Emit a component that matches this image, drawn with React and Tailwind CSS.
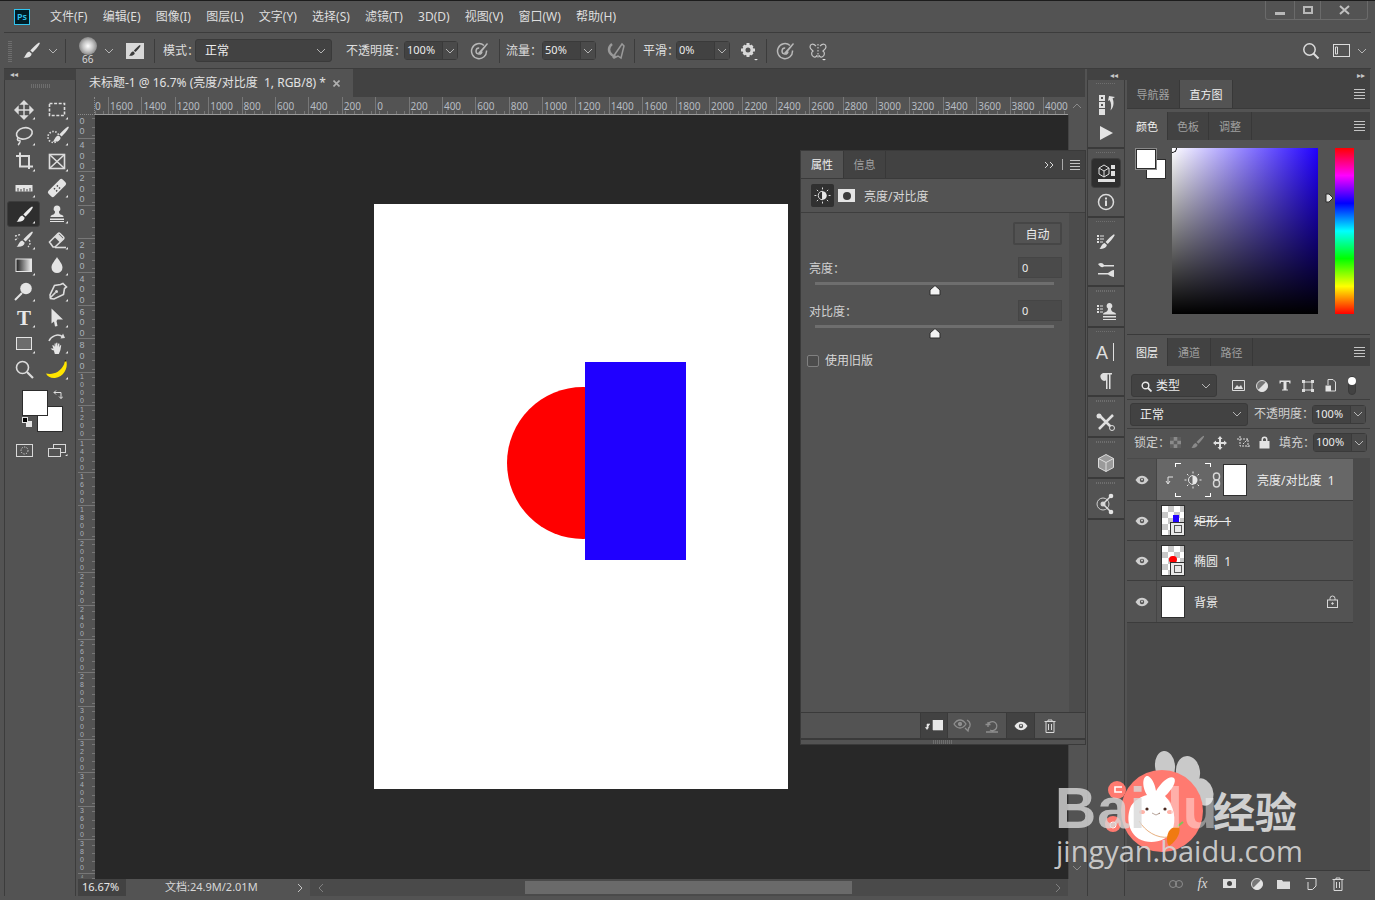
const menus = ["文件(F)", "编辑(E)", "图像(I)", "图层(L)", "文字(Y)", "选择(S)", "滤镜(T)", "3D(D)", "视图(V)", "窗口(W)", "帮助(H)"];
const topRuler = [1600, 1400, 1200, 1000, 800, 600, 400, 200, 0, 200, 400, 600, 800, 1000, 1200, 1400, 1600, 1800, 2000, 2200, 2400, 2600, 2800, 3000, 3200, 3400, 3600, 3800, 4000];
const leftRuler = [400, 200, 0, 200, 400, 600, 800, 1000, 1200, 1400, 1600, 1800, 2000, 2200, 2400, 2600, 2800, 3000, 3200, 3400, 3600, 3800];

function Chevron({ className = "" }) {
  return (
    <svg width="10" height="6" viewBox="0 0 10 6" className={className}>
      <path d="M1 1l4 4 4-4" fill="none" stroke="#b5b5b5" strokeWidth="1" />
    </svg>
  );
}

function BrushShape({ c = "#e2e2e2" }) {
  return (
    <g fill={c}>
      <path d="M23 3.5c.8.1 1 .9.6 1.6-1.600 2.700-4.500 6.200-7 8.500l-2.300-2.100C17 8.700 20.500 5 23 3.500z" />
      <path d="M13.300 12.500l2.400 2.300c-.4 2.900-3.600 4.500-8.200 3.900 2.200-1.100 2-4.900 5.800-6.200z" />
    </g>
  );
}

// 30x24 tool icons, small corner triangle marks a tool group
function Tool({ children, mark = true, active = false }) {
  return (
    <div className={`flex h-[26px] w-[33px] items-center justify-center ${active ? "rounded-[3px] border border-[#3d3d3d] bg-[#2e2e2e]" : ""}`}>
      <svg width="30" height="24" viewBox="0 0 30 24">
        {children}
        {mark && <path d="M26 21.500h-2.500l2.500-2.500z" fill="#e6e6e6" />}
      </svg>
    </div>
  );
}

const S = { fill: "none", stroke: "#dcdcdc", strokeWidth: 1.600 };

const tools = [
  <Tool key="move"><path d="M15 4v16M7 12h16M15 3l-3 3h6zM15 21l-3-3h6zM6 12l3-3v6zM24 12l-3-3v6z" {...S} fill="#dcdcdc" strokeWidth="1.400" /></Tool>,
  <Tool key="marquee"><rect x="7.500" y="5.500" width="15" height="12" {...S} strokeDasharray="3 1.600" /></Tool>,
  <Tool key="lasso"><ellipse cx="15.500" cy="9.500" rx="8" ry="5.500" {...S} transform="rotate(-15 15 10)" /><path d="M9 14c-1.500 2 .5 3 1.500 2.500S11 20 9 21" {...S} /></Tool>,
  <Tool key="quick"><circle cx="11.500" cy="13" r="5.500" {...S} strokeDasharray="1.500 1.500" /><g transform="translate(3 -1)"><BrushShape /></g></Tool>,
  <Tool key="crop" mark><path d="M7 6h13v13M11 2.500v14h13" {...S} strokeWidth="2" /></Tool>,
  <Tool key="frame"><rect x="7.500" y="4.500" width="15" height="14" {...S} /><path d="M8 5l14 13M22 5L8 18" {...S} /></Tool>,
  <Tool key="ruler"><path d="M6.500 9h17v6.500h-17z" fill="#e4e4e4" /><path d="M9 12v3.500M12 13v2.500M15 12v3.500M18 13v2.500M21 12v3.500" stroke="#4a4a4a" /></Tool>,
  <Tool key="heal"><g transform="rotate(-45 15 12)"><rect x="5" y="8" width="20" height="8" rx="2" fill="#e4e4e4" /><path d="M12 10h1.500v1.500H12zM16 10h1.500v1.500H16zM12 13h1.500v1.500H12zM16 13h1.500v1.500H16z" fill="#4a4a4a" /></g></Tool>,
  <Tool key="brush" active><g transform="translate(0 1)"><BrushShape c="#ececec" /></g></Tool>,
  <Tool key="stamp"><path d="M15 3.500a3.300 3.300 0 0 1 2 6c-.2 1.500.6 2.300 1.500 3 1 .5 3 .4 3 2.500H8.500c0-2.100 2-2 3-2.500.9-.7 1.700-1.500 1.500-3a3.300 3.300 0 0 1 2-6zM8 16.500h14V18H8zM8 19h14v1H8z" fill="#e4e4e4" /></Tool>,
  <Tool key="history"><BrushShape /><path d="M6 8l6-1.500M6 12l3-2M20 12c2 2 1 5-1 7" stroke="#dcdcdc" strokeWidth="1.300" strokeDasharray="2 1.200" fill="none" /></Tool>,
  <Tool key="eraser"><path d="M7.500 14L16 5.500a1.500 1.500 0 0 1 2 0l3.500 3.500a1.500 1.500 0 0 1 0 2L13 19H11z" {...S} /><path d="M16 5.500l5.500 5.500L18 14.500l-5.500-5.500z" fill="#dcdcdc" /><path d="M13 19.500h11" {...S} /></Tool>,
  <Tool key="gradient"><defs><linearGradient id="grad"><stop offset="0" stopColor="#1c1c1c" /><stop offset="1" stopColor="#f2f2f2" /></linearGradient></defs><rect x="7" y="5" width="15.500" height="12.500" fill="url(#grad)" stroke="#e4e4e4" /></Tool>,
  <Tool key="drop"><path d="M15 3c1.500 3 5.500 6.500 5.500 10.500a5.500 5.500 0 0 1-11 0C9.500 9.500 13.500 6 15 3z" fill="#e4e4e4" /></Tool>,
  <Tool key="dodge"><circle cx="17" cy="8.500" r="5.800" fill="#e4e4e4" /><path d="M13 13l-7 7" stroke="#e4e4e4" strokeWidth="2" /></Tool>,
  <Tool key="pen"><path d="M21 3.500l3.500 3.500-2 1.500-1 6-9.500 4.500-3.500-.5-.5-3.500 4.500-9.500 6-1z" {...S} /><path d="M8 18l5.500-5.500" {...S} /><circle cx="14.500" cy="11.500" r="1.500" fill="#dcdcdc" /></Tool>,
  <Tool key="type"><text x="15" y="19" textAnchor="middle" fontFamily="Liberation Serif" fontWeight="700" fontSize="21" fill="#e8e8e8">T</text></Tool>,
  <Tool key="arrow"><path d="M9.500 2.500l11.500 11h-5.500l-1 1.500 1 5-2.500.5-1-5-2.500 2z" fill="#e4e4e4" /></Tool>,
  <Tool key="shape"><rect x="7.500" y="5.500" width="15" height="12" fill="#6c6c6c" stroke="#e4e4e4" /></Tool>,
  <Tool key="hand"><path d="M7 9c2-5 9-8 14-4" {...S} strokeWidth="1.500" /><path d="M21 1.500l2 4.500-4.500.5z" fill="#dcdcdc" /><g transform="translate(3 6) scale(.8)"><path d="M10 12l-1-3h1.500l1.500 2V7h1.500v4l.5-5H15.500v5l1-4H18v5l1-3h1.300l-1 6-2 5h-5z M7 13l3 0 2 3-3-1z" fill="#e6e6e6" /></g></Tool>,
  <Tool key="zoom" mark={false}><circle cx="13.500" cy="9.500" r="6" {...S} /><path d="M18 14l6 6" stroke="#dcdcdc" strokeWidth="2.200" /></Tool>,
  <Tool key="banana"><path d="M4 15.500c7 1.500 14-1 18-9l1-3.500 1.500.5c1.500 7-3 15.500-11.500 16.500-4.500.3-7.500-1.500-9-4.500z" fill="#ffe500" /><path d="M23 3.500l.6-1.500" stroke="#33290a" strokeWidth="1.200" /></Tool>,
];

function PanelTab({ label, active, w }) {
  return (
    <div className={`flex h-full items-center justify-center border-r border-[#383838] pt-[2px] text-[11px] ${w} ${active ? "bg-[#535353] text-[#f0f0f0]" : "text-[#a0a0a0]"}`}>
      {label}
    </div>
  );
}

function TabBar({ children }) {
  return (
    <div className="flex h-[28px] shrink-0 items-stretch bg-[#424242]">
      {children}
      <div className="ml-auto flex w-[22px] flex-col items-center justify-center gap-[2px]">
        <i className="h-px w-[11px] bg-[#c4c4c4]" />
        <i className="h-px w-[11px] bg-[#c4c4c4]" />
        <i className="h-px w-[11px] bg-[#c4c4c4]" />
        <i className="h-px w-[11px] bg-[#c4c4c4]" />
      </div>
    </div>
  );
}

function Grip() {
  return <div className="mx-auto h-[4px] w-[20px] bg-[repeating-linear-gradient(90deg,#6e6e6e_0,#6e6e6e_1px,transparent_1px,transparent_2px)]" />;
}

function ComboInput({ value, w = "w-[54px]" }) {
  return (
    <div className={`flex h-[19px] items-center rounded-[3px] border border-[#3a3a3a] text-[11px] text-[#ececec] ${w}`}>
      <div className="flex h-full flex-1 items-center bg-[#424242] pl-[2px]">{value}</div>
      <div className="flex h-full w-[15px] items-center justify-center border-l border-[#3a3a3a] bg-[#4a4a4a]">
        <Chevron />
      </div>
    </div>
  );
}

function Select({ label, w, h = "h-[23px]", icon }) {
  return (
    <div className={`flex items-center justify-between rounded-[3px] border border-[#3a3a3a] bg-[#424242] pr-[5px] text-[12px] text-[#ececec] ${w} ${h}`}>
      <span className="flex items-center gap-[4px] pl-[9px] pt-[1px]">{icon}{label}</span>
      <Chevron />
    </div>
  );
}

function Sep({ ml, mr }) {
  return <div className={`h-[24px] w-px bg-[#3c3c3c] ${ml} ${mr}`} />;
}

function Eye({ c = "#cfcfcf" }) {
  return (
    <svg width="14" height="10" viewBox="0 0 14 10">
      <path d="M.5 5C3 1.500 5 .8 7 .8s4 .7 6.500 4.200C11 8.500 9 9.200 7 9.200S3 8.500.5 5z" fill={c} />
      <circle cx="7" cy="5" r="2.200" fill="#535353" />
      <circle cx="7" cy="4.600" r="1" fill={c} />
    </svg>
  );
}

function SunIcon({ size = 18, c = "#e8e8e8" }) {
  return (
    <svg width={size} height={size} viewBox="0 0 18 18">
      <path d="M9 4.500a4.500 4.500 0 0 0 0 9z" fill="none" stroke={c} />
      <path d="M9 4.500a4.500 4.500 0 0 1 0 9z" fill={c} />
      <path d="M9 .5v2M9 15.500v2M.5 9h2M15.500 9h2M3 3l1.400 1.400M13.600 13.600L15 15M3 15l1.400-1.400M13.600 4.400L15 3" stroke={c} />
    </svg>
  );
}

function Checker({ dot }) {
  return (
    <div className="relative h-[31px] w-[24px] border border-[#2f2f2f] bg-white bg-[conic-gradient(#c8c8c8_25%,#ffffff_0_50%,#c8c8c8_0_75%,#ffffff_0)] bg-[length:12px_12px]">
      {dot}
      <div className="absolute bottom-0 right-0 flex h-[13px] w-[14px] items-center justify-center border-l border-t border-[#2f2f2f] bg-[#e8e8e8]">
        <div className="h-[8px] w-[8px] border border-[#555]" />
      </div>
    </div>
  );
}

function LayerRow({ h, active, thumb, children }) {
  return (
    <div className={`flex w-[226px] items-center border-b border-[#3c3c3c] ${h} ${active ? "bg-[#676767]" : "bg-[#535353]"}`}>
      <div className="flex h-full w-[30px] shrink-0 items-center justify-center border-r border-[#454545] bg-[#535353]">
        <Eye />
      </div>
      {thumb}
      {children}
    </div>
  );
}

function LayerName({ ml = "ml-[10px]", className = "", children }) {
  return <span className={`whitespace-pre pt-[2px] text-[#ececec] ${ml} ${className}`}>{children}</span>;
}

function DockBtn({ children, active }) {
  return (
    <div className={`flex h-[28px] w-[28px] items-center justify-center rounded-[3px] ${active ? "bg-[#2e2e2e] ring-1 ring-[#3d3d3d]" : ""}`}>
      <svg width="24" height="24" viewBox="0 0 24 24">{children}</svg>
    </div>
  );
}

function DockGroup({ h, children }) {
  return (
    <div className={`flex flex-col items-center border-b-2 border-[#3a3a3a] pt-[3px] ${h}`}>
      <Grip />
      <div className="mt-[6px] flex flex-col items-center gap-[1px]">{children}</div>
    </div>
  );
}

function Watermark() {
  return (
    <div className="pointer-events-none absolute left-[1050px] top-[750px] h-[130px] w-[260px]">
      <svg width="130" height="110" viewBox="0 0 130 110" className="absolute left-[45px] top-0">
        <ellipse cx="70" cy="15" rx="10" ry="15" fill="#c9c9c9" transform="rotate(-5 70 15)" />
        <ellipse cx="93" cy="21" rx="12" ry="16" fill="#c9c9c9" transform="rotate(-8 93 21)" />
        <ellipse cx="108" cy="41" rx="10" ry="14" fill="#c9c9c9" transform="rotate(-20 108 41)" />
        <circle cx="67" cy="60" r="41" fill="#ff7a70" />
        <circle cx="22" cy="39" r="9" fill="#ff7a70" />
        <circle cx="18" cy="73" r="8" fill="#ff7a70" />
        <path d="M27 36h-7v5h7" fill="none" stroke="#fff" strokeWidth="1.600" />
        <circle cx="18" cy="74" r="3" fill="none" stroke="#fff" />
        <path d="M52 44c-6-10-4-20 1-19 4 2 7 8 8 15 6-10 14-16 18-13 3 3-2 12-9 18 9 9 12 24 7 35-6 11-22 14-33 8-11-7-13-22-8-33 3-5 9-9 16-11z" fill="#fff" />
        <circle cx="52" cy="58" r="1.600" fill="#4b2a20" />
        <circle cx="70" cy="58" r="1.600" fill="#4b2a20" />
        <ellipse cx="47" cy="61" rx="3" ry="2" fill="#ffb3a8" />
        <ellipse cx="75" cy="61" rx="3" ry="2" fill="#ffb3a8" />
        <path d="M57 62l4 2 4-2" fill="none" stroke="#8a6a5a" />
        <path d="M44 70c6 10 18 18 30 16" fill="none" stroke="#e8b080" />
        <path d="M72 87c1-8 5-12 12-11 2 4-1 13-10 19-2-2-2-5-2-8z" fill="#f07a12" />
        <path d="M83 75l5-4" stroke="#7ec45a" strokeWidth="2" />
      </svg>
      <span className="absolute left-[5px] top-[22px] font-['Liberation_Sans'] text-[57px] font-bold leading-[70px] tracking-[1px] text-[#d8d8d8]/80">Bai</span>
      <span className="absolute left-[98px] top-[22px] font-['Liberation_Sans'] text-[57px] font-bold leading-[70px] text-white/40">du</span>
      <span className="absolute left-[163px] top-[32px] font-['Noto_Sans_CJK_SC'] text-[42px] font-bold leading-[54px] text-[#cfcfcf]">经验</span>
      <span className="absolute left-[6px] top-[77px] font-['Open_Sans'] text-[29px] leading-[46px] text-[#d8d8d8]/90">jingyan.baidu.com</span>
    </div>
  );
}

function Adjust({ label, top }) {
  return (
    <div className={top}>
      <div className="flex items-center justify-between">
        <span className="pt-[2px] text-[#d0d0d0]">{label}</span>
        <div className="h-[21px] w-[44px] border border-[#454545] bg-[#4a4a4a] pl-[3px] text-[11px] leading-[19px] text-[#ececec]">0</div>
      </div>
      <div className="relative ml-[6px] mt-[4px] h-[3px] w-[239px] bg-[#6e6e6e]">
        <svg width="12" height="11" viewBox="0 0 12 11" className="absolute left-[114px] top-[3px]">
          <path d="M6 .5l5 4.500v5H1V5z" fill="#f2f2f2" stroke="#2c2c2c" />
        </svg>
      </div>
    </div>
  );
}

function PropertiesPanel() {
  return (
    <div className="absolute left-[722px] top-[81px] flex h-[595px] w-[286px] flex-col border border-[#3a3a3a] bg-[#535353] text-[12px] text-[#d8d8d8]">
      <div className="flex h-[28px] shrink-0 items-stretch border-b border-[#3a3a3a] bg-[#424242]">
        <PanelTab label="属性" active w="w-[43px]" />
        <PanelTab label="信息" w="w-[42px]" />
        <div className="ml-auto flex items-center pr-[5px] text-[#cfcfcf]">
          <svg width="10" height="8" viewBox="0 0 10 8"><path d="M1 1l3 3-3 3M6 1l3 3-3 3" fill="none" stroke="#d8d8d8" /></svg>
          <i className="ml-[8px] mr-[7px] h-[11px] w-px bg-[#aaa]" />
          <div className="flex flex-col gap-[2px]">
            <i className="h-px w-[10px] bg-[#c4c4c4]" />
            <i className="h-px w-[10px] bg-[#c4c4c4]" />
            <i className="h-px w-[10px] bg-[#c4c4c4]" />
            <i className="h-px w-[10px] bg-[#c4c4c4]" />
          </div>
        </div>
      </div>
      <div className="flex h-[34px] shrink-0 items-center border-b border-[#3e3e3e] pl-[10px]">
        <div className="flex h-[23px] w-[23px] items-center justify-center rounded-[2px] bg-[#303030]"><SunIcon size={17} /></div>
        <div className="ml-[4px] flex h-[13px] w-[17px] items-center justify-center bg-[#e4e4e4]"><i className="h-[8px] w-[8px] rounded-full bg-[#3a3a3a]" /></div>
        <span className="ml-[9px] pt-[2px]">亮度/对比度</span>
      </div>
      <div className="flex min-h-0 flex-1">
        <div className="flex-1 pl-[8px] pr-[7px]">
          <div className="flex justify-end pt-[9px]">
            <div className="flex h-[23px] w-[49px] items-center justify-center rounded-[2px] border-2 border-[#464646] pt-[2px] text-[#ececec]">自动</div>
          </div>
          <Adjust label="亮度：" top="mt-[12px]" />
          <Adjust label="对比度：" top="mt-[15px]" />
          <div className="-ml-[2px] mt-[24px] flex items-center gap-[6px]">
            <i className="h-[12px] w-[12px] rounded-[2px] border border-[#808080] bg-[#4c4c4c]" />
            <span>使用旧版</span>
          </div>
        </div>
        <div className="w-[16px] bg-[#4c4c4c]" />
      </div>
      <div className="flex h-[26px] shrink-0 items-stretch border-t border-[#3a3a3a] pl-[119px]">
        <div className="flex w-[28px] items-center justify-center border-x border-[#3a3a3a] bg-[#424242]">
          <svg width="18" height="11" viewBox="0 0 18 11"><path d="M8 0h10v10H8zM5 4H2v5M.5 7.500L2 9.500l1.500-2z" fill="#e8e8e8" stroke="#e8e8e8" strokeWidth=".6" /></svg>
        </div>
        <div className="flex w-[30px] items-center justify-center">
          <svg width="20" height="14" viewBox="0 0 20 14" fill="none" stroke="#8e8e8e" strokeWidth="1.300"><path d="M1 5c2-3 4-4 6-4s4 1 6 4c-2 3-4 4-6 4S3 8 1 5z" /><circle cx="7" cy="5" r="1.500" fill="#8e8e8e" /><path d="M14 1c4 2 4 7 1 9M12 9l3 3 1-4" /></svg>
        </div>
        <div className="flex w-[29px] items-center justify-center border-r border-[#3a3a3a]">
          <svg width="14" height="14" viewBox="0 0 14 14" fill="none" stroke="#8e8e8e" strokeWidth="1.300"><path d="M3 6a4.500 4.500 0 1 1 2 5M1 13h12M.5 5.500h5M3 3v5" /></svg>
        </div>
        <div className="flex w-[28px] items-center justify-center border-r border-[#3a3a3a] bg-[#424242]"><Eye c="#e8e8e8" /></div>
        <div className="flex w-[29px] items-center justify-center"><Trash /></div>
      </div>
      <div className="flex h-[6px] shrink-0 items-center justify-center border-t-2 border-[#3a3a3a]"><Grip /></div>
    </div>
  );
}

function Trash({ c = "#d8d8d8" }) {
  return (
    <svg width="12" height="14" viewBox="0 0 12 14" fill="none" stroke={c}>
      <path d="M.5 2.500h11M4 2.500V1h4v1.500M2 2.500V13.500h8V2.500M4.500 5v6M7.500 5v6" />
    </svg>
  );
}

function FootIcon({ children }) {
  return <div className="flex w-[27px] items-center justify-center">{children}</div>;
}

export default function App() {
  return (
    <div className="relative flex h-[900px] w-[1375px] flex-col overflow-hidden border-t border-[#1c1c1c] bg-[#535353] font-['Noto_Sans','Noto_Sans_CJK_SC',sans-serif] text-[12px] text-[#dedede]">
      {/* Title bar */}
      <div className="flex h-[31px] shrink-0 items-center pl-[14px]">
        <div className="flex h-[16px] w-[16px] items-center justify-center border border-[#31c5f0] bg-[#001d26] text-[9px] font-semibold leading-none text-[#31c5f0]">Ps</div>
        <div className="ml-[20px] flex gap-[15.200px]">
          {menus.map((m) => <span key={m} className="whitespace-nowrap">{m}</span>)}
        </div>
        <div className="mb-[12px] ml-auto mr-[7px] flex h-[19px] w-[103px] rounded-b-[3px] border border-t-0 border-[#6a6a6a]">
          <div className="flex w-[28px] items-end justify-center pb-[4px]"><i className="h-[3px] w-[10px] bg-[#b8b8b8]" /></div>
          <div className="flex w-[27px] items-center justify-center border-x border-[#6a6a6a]"><i className="h-[8px] w-[10px] border-2 border-[#b8b8b8]" /></div>
          <div className="flex flex-1 items-center justify-center">
            <svg width="11" height="10" viewBox="0 0 11 10"><path d="M1 1l9 8M10 1L1 9" stroke="#c0c0c0" strokeWidth="2" /></svg>
          </div>
        </div>
      </div>

      {/* Options bar */}
      <div className="mx-[4px] flex h-[37px] shrink-0 items-center border-y border-[#3c3c3c] bg-[#535353] text-[12px]">
        <div className="ml-[4px] h-[22px] w-[4px] bg-[repeating-linear-gradient(0deg,#6e6e6e_0,#6e6e6e_1px,transparent_1px,transparent_2px)]" />
        <svg width="22" height="20" viewBox="4 2 22 20" className="ml-[8px]"><BrushShape /></svg>
        <Chevron className="ml-[6px]" />
        <Sep ml="ml-[7px]" />
        <div className="relative ml-[13px] h-[26px] w-[18px]">
          <div className="-mt-[1px] h-[18px] w-[18px] rounded-full bg-[radial-gradient(circle,#ffffff_0,#c4c4c4_40%,#6e6e6e_85%,#535353_100%)]" />
          <span className="absolute left-[3px] top-[15px] text-[10px] leading-[12px] text-[#d8d8d8]">66</span>
        </div>
        <Chevron className="ml-[7px]" />
        <div className="ml-[12px] flex h-[16px] w-[18px] items-center justify-center bg-[#d8d8d8]">
          <svg width="14" height="14" viewBox="6 2 20 20"><BrushShape c="#3a3a3a" /></svg>
        </div>
        <Sep ml="ml-[10px]" />
        <span className="ml-[8px] whitespace-nowrap">模式：</span>
        <Select label="正常" w="w-[137px] -ml-[4px]" />
        <span className="ml-[14px] whitespace-nowrap">不透明度：</span>
        <ComboInput value="100%" w="w-[54px] -ml-[2px]" />
        <svg width="20" height="20" viewBox="0 0 20 20" className="ml-[12px]" fill="none" stroke="#b8b8b8" strokeWidth="1.500"><path d="M14 4.500a7.500 7.500 0 1 0 2.500 5M12 10.500a3 3 0 1 1-2.800-3.500" /><path d="M8 12l9-10 1 1-8 10z" fill="#b8b8b8" stroke="none" /></svg>
        <Sep ml="ml-[9px]" />
        <span className="ml-[6px] whitespace-nowrap">流量：</span>
        <ComboInput value="50%" />
        <svg width="20" height="20" viewBox="0 0 20 20" className="ml-[10px]" fill="none" stroke="#9a9a9a" strokeWidth="1.500"><path d="M6 3C2 6 2 11 6 14l4 2" strokeWidth="2.500" /><path d="M7 16L16 3l2 2-3 12-3-2-4 2z" /></svg>
        <Sep ml="ml-[8px]" />
        <span className="ml-[8px] whitespace-nowrap">平滑：</span>
        <ComboInput value="0%" w="w-[54px] -ml-[3px]" />
        <svg width="20" height="20" viewBox="0 0 20 20" className="ml-[9px]" fill="#d8d8d8"><circle cx="9" cy="9" r="4" fill="none" stroke="#d8d8d8" strokeWidth="3" /><path d="M7.500 2h3v3h-3zM7.500 13h3v3h-3zM2 7.500h3v3H2zM13 7.500h3v3h-3zM3.500 5.500l2-2 2 2-2 2zM10.500 12.500l2-2 2 2-2 2zM12.500 3.500l2 2-2 2-2-2zM5.500 10.500l2 2-2 2-2-2z" /><path d="M15 18h4l-2 1.500z" fill="#e8e8e8" /></svg>
        <Sep ml="ml-[7px]" />
        <svg width="20" height="20" viewBox="0 0 20 20" className="ml-[9px]" fill="none" stroke="#b8b8b8" strokeWidth="1.500"><path d="M14 4.500a7.500 7.500 0 1 0 2.500 5M12 10.500a3 3 0 1 1-2.800-3.500" /><path d="M8 12l9-10 1 1-8 10z" fill="#b8b8b8" stroke="none" /></svg>
        <svg width="20" height="20" viewBox="0 0 20 20" className="ml-[12px]" fill="none" stroke="#c4c4c4" strokeWidth="1.200"><path d="M10 3v15" strokeDasharray="1.500 1.500" /><path d="M8 5C5 2 2 3 2 6c0 2 2 3 3 4-2 1-2 5 1 6 2 .5 3-1 3-2M12 5c3-3 6-2 6 1 0 2-2 3-3 4 2 1 2 5-1 6-2 .5-3-1-3-2" /><path d="M14 18h4l-2 1.500z" fill="#e8e8e8" stroke="none" /></svg>
        <div className="ml-auto flex items-center">
          <svg width="18" height="18" viewBox="0 0 18 18" fill="none" stroke="#dcdcdc"><circle cx="7.500" cy="7.500" r="5.700" strokeWidth="1.500" /><path d="M11.500 11.500l5 5" strokeWidth="2" /></svg>
          <svg width="17" height="13" viewBox="0 0 17 13" className="ml-[13px]" fill="none" stroke="#dcdcdc"><rect x=".5" y=".5" width="16" height="12" /><path d="M2.500 3h2v7h-2z" /></svg>
          <Chevron className="ml-[7px] mr-[4px]" />
        </div>
      </div>

      {/* Main */}
      <div className="flex min-h-0 flex-1 gap-[2px] pb-[4px] pl-[4px] pr-[5px]">
        {/* Left toolbar */}
        <div className="flex w-[72px] shrink-0 flex-col">
          <div className="h-[11px] bg-[#424242] pl-[6px] text-[8px] leading-[9px] text-[#c8c8c8]">◂◂</div>
          <div className="flex flex-1 flex-col border-x border-[#3c3c3c] pl-[2px] pt-[4px]">
            <Grip />
            <div className="mt-[9px] grid w-[66px] grid-cols-2">{tools}</div>
            <div className="relative ml-[15px] mt-[7px] h-[42px] w-[46px]">
              <div className="absolute left-[15px] top-[16px] h-[26px] w-[26px] border border-[#2c2c2c] bg-white" />
              <div className="absolute left-0 top-0 h-[26px] w-[26px] border border-[#2c2c2c] bg-white" />
              <svg width="10" height="10" viewBox="0 0 10 10" className="absolute left-[31px] top-0" fill="none" stroke="#e0e0e0"><path d="M1 2.500h7v6M1 2.500l2-2M1 2.500l2 2M8 8.500l-2-2M8 8.500l2-2" /></svg>
              <div className="absolute left-[4px] top-[31px] h-[6px] w-[6px] bg-[#e4e4e4]" />
              <div className="absolute left-0 top-[27px] h-[6px] w-[6px] border border-[#e4e4e4] bg-black" />
            </div>
            <div className="ml-[1px] mt-[12px] grid w-[66px] grid-cols-2 justify-items-center">
              <svg width="18" height="13" viewBox="0 0 18 13"><rect x=".5" y=".5" width="16" height="12" fill="none" stroke="#d8d8d8" /><circle cx="8.500" cy="6.500" r="3.500" fill="none" stroke="#d8d8d8" strokeDasharray="1.300 1.300" /></svg>
              <svg width="20" height="14" viewBox="0 0 20 14" fill="none" stroke="#d8d8d8"><rect x="5.500" y=".5" width="12" height="8" /><rect x=".5" y="4.500" width="12" height="8" fill="#535353" /><path d="M17 12h2.500v-2z" fill="#e6e6e6" stroke="none" /></svg>
            </div>
          </div>
        </div>

        {/* Document */}
        <div className="relative flex w-[1007px] shrink-0 flex-col">
          <div className="flex h-[28px] shrink-0 items-stretch bg-[#424242]">
            <div className="flex w-[275px] items-center justify-between bg-[#535353] pl-[11px] pr-[13px] text-[12px] text-[#e2e2e2]">
              <span className="whitespace-pre">未标题-1 @ 16.7% (亮度/对比度  1, RGB/8) *</span>
              <svg width="7" height="7" viewBox="0 0 7 7"><path d="M.5.5l6 6M6.500.5l-6 6" stroke="#b0b0b0" strokeWidth="1.600" /></svg>
            </div>
          </div>
          <div className="flex h-[18px] shrink-0 bg-[#535353]">
            <div className="w-[17px] shrink-0 border-b border-r border-dotted border-[#8a8a8a]" />
            <div className="flex h-full w-[973px] overflow-hidden border-b border-[#9a9a9a] bg-[repeating-linear-gradient(90deg,#777777_0,#777777_1px,transparent_1px,transparent_8.350px)] bg-[length:100%_3px] bg-bottom bg-no-repeat text-[10px] leading-[19px] text-[#b6bcc2]">
              <div className="w-[13px] shrink-0 text-left">0</div>
              {topRuler.map((n, i) => (
                <div key={i} className="h-full w-[33.400px] shrink-0 border-l border-[#777] pl-[1px]">{n}</div>
              ))}
            </div>
            <div className="flex flex-1 items-center justify-center">
              <svg width="10" height="6" viewBox="0 0 10 6"><path d="M1 5l4-4 4 4" fill="none" stroke="#8a8a8a" /></svg>
            </div>
          </div>
          <div className="flex min-h-0 flex-1">
            <div className="w-[17px] shrink-0 overflow-hidden bg-[#535353] bg-[repeating-linear-gradient(0deg,#777777_0,#777777_1px,transparent_1px,transparent_8.350px)] bg-[length:3px_100%] bg-right bg-no-repeat text-center font-['Liberation_Sans'] text-[#aab2ba]">
              <div className="h-[23px] pr-[9px] pt-[1px] text-[9px] leading-[10px]">0<br />0</div>
              {leftRuler.map((n, i) => (
                <div key={i} className={`h-[33.400px] border-t border-[#777] pr-[9px] ${n > 999 ? "text-[7px] leading-[8px]" : "pt-[1px] text-[9px] leading-[10.500px]"}`}>
                  {String(n).split("").map((d, j) => <div key={j}>{d}</div>)}
                </div>
              ))}
              <div className="h-[6px] border-t border-[#777] pr-[9px] text-[4px] leading-[5px]">4</div>
            </div>
            <div className="min-w-0 flex-1 bg-[#282828] pl-[279px] pt-[89px]">
              <div className="h-[585px] w-[414px] bg-white">
                <svg width="414" height="585" viewBox="0 0 414 585">
                  <circle cx="209" cy="259" r="76" fill="#ff0000" />
                  <rect x="211" y="158" width="101" height="198" fill="#2000ff" />
                </svg>
              </div>
            </div>
            <div className="flex w-[17px] shrink-0 flex-col items-center justify-end border-l border-[#444] bg-[#535353] pb-[8px]">
              <svg width="10" height="6" viewBox="0 0 10 6"><path d="M1 1l4 4 4-4" fill="none" stroke="#8a8a8a" /></svg>
            </div>
          </div>
          <div className="flex h-[17px] shrink-0 items-center text-[11px]">
            <div className="flex h-full w-[48px] items-center bg-[#424242] pl-[4px] text-[#e8e8e8]">16.67%</div>
            <div className="flex h-full w-[184px] items-center bg-[#535353] pl-[39px] text-[#d8d8d8]">
              文档:24.9M/2.01M
              <svg width="6" height="10" viewBox="0 0 6 10" className="ml-auto mr-[7px]"><path d="M1 1l4 4-4 4" fill="none" stroke="#c4c4c4" /></svg>
            </div>
            <div className="flex h-full flex-1 items-center bg-[#4a4a4a] pl-[8px] pr-[7px]">
              <svg width="6" height="10" viewBox="0 0 6 10"><path d="M5 1L1 5l4 4" fill="none" stroke="#808080" /></svg>
              <div className="ml-[201px] h-[13px] w-[327px] bg-[#6a6a6a]" />
              <svg width="6" height="10" viewBox="0 0 6 10" className="ml-auto"><path d="M1 1l4 4-4 4" fill="none" stroke="#808080" /></svg>
            </div>
            <div className="h-full w-[17px] bg-[#535353]" />
          </div>
          <PropertiesPanel />
        </div>

        {/* Dock + panels */}
        <div className="flex min-w-0 flex-1 flex-col">
          <div className="flex h-[11px] shrink-0 items-center justify-between bg-[#424242] pl-[23px] pr-[5px] text-[8px] leading-none text-[#c8c8c8]">
            <span>◂◂</span><span>▸▸</span>
          </div>
          <div className="flex min-h-0 flex-1 gap-[2px]">
            <div className="flex w-[38px] shrink-0 flex-col border-x border-[#3c3c3c]">
              <DockGroup h="h-[69px]">
                <DockBtn><path d="M5 3h6v6H5zM7 5v2h2V5zM5 10h6v6H5zM7 12v2h2v-2zM5 17h6v6H5z" fill="#e0e0e0" fillRule="evenodd" /><path d="M15 4l6 1-2.500 1.500c2 4 1 9-2 12 1-4 1-8-1-10.500L14 9z" fill="#e0e0e0" /></DockBtn>
                <DockBtn><path d="M6 5v14l13-7z" fill="#e4e4e4" /></DockBtn>
              </DockGroup>
              <DockGroup h="h-[69px]">
                <DockBtn active><path d="M5 7l5-3 5 3v6l-5 3-5-3z" fill="none" stroke="#e0e0e0" /><path d="M5 7l5 3 5-3M10 10v6" stroke="#e0e0e0" fill="none" /><path d="M17 4h4v4h-4zM17 10h4v5h-4zM4 18h17v3H4z" fill="#e0e0e0" /></DockBtn>
                <DockBtn><circle cx="12" cy="12" r="7.500" fill="none" stroke="#dcdcdc" strokeWidth="1.500" /><path d="M11 10.500h2V16h-2zM11 7.500h2v2h-2z" fill="#dcdcdc" /></DockBtn>
              </DockGroup>
              <DockGroup h="h-[69px]">
                <DockBtn><path d="M3 5h2v2H3zM3 8h2v2H3zM3 11h2v2H3zM6 5.500h4v1H6zM6 8.500h4v1H6zM6 11.500h3v1H6z" fill="#e0e0e0" /><g transform="translate(-2 1) scale(.95)"><BrushShape /></g></DockBtn>
                <DockBtn><path d="M4 5c3-2 5-1 6 1h10v1.500H10C8 9 6 8 4 5zM20 11v7c-2 0-4-1-6-2.500H4v-1.500h10c2-1.500 4-3 6-3z" fill="#e0e0e0" /></DockBtn>
              </DockGroup>
              <DockGroup h="h-[41px]">
                <DockBtn><path d="M3 5h2v2H3zM3 8h2v2H3zM3 11h2v2H3zM6 5.500h3v1H6zM6 8.500h3v1H6zM6 11.500h3v1H6z" fill="#e0e0e0" /><path d="M15 3a3 3 0 0 1 2 5.500c0 2 1 3 2 3.500s3 .5 3 2.500H9c0-2 2-2 3-2.500s2-1.500 2-3.500A3 3 0 0 1 15 3zM9 16h13v1.500H9zM9 19h13v1H9z" fill="#e0e0e0" /></DockBtn>
              </DockGroup>
              <DockGroup h="h-[69px]">
                <DockBtn><text x="2" y="19" fontFamily="Liberation Sans" fontSize="18" fill="#e0e0e0">A</text><path d="M19.500 3v18" stroke="#e0e0e0" /></DockBtn>
                <DockBtn><path d="M9 4h9v1.500h-1.500V20H15V5.500h-1.500V20H12v-8.500a4 4 0 0 1-3-7.500z" fill="#e0e0e0" /></DockBtn>
              </DockGroup>
              <DockGroup h="h-[41px]">
                <DockBtn><path d="M5 5l14 14M19 5L5 19" stroke="#e0e0e0" strokeWidth="2.500" /><circle cx="18" cy="18" r="2.500" fill="#535353" stroke="#e0e0e0" /><circle cx="5" cy="6" r="2.500" fill="#e0e0e0" /></DockBtn>
              </DockGroup>
              <DockGroup h="h-[41px]">
                <DockBtn><path d="M12 3.500l7.500 4v9l-7.500 4-7.500-4v-9z" fill="#9a9a9a" stroke="#dcdcdc" /><path d="M4.500 7.500l7.500 4 7.500-4M12 11.500v9" stroke="#dcdcdc" fill="none" /></DockBtn>
              </DockGroup>
              <DockGroup h="h-[41px]">
                <DockBtn><circle cx="9" cy="12" r="6" fill="none" stroke="#d0d0d0" /><circle cx="9" cy="12" r="2.500" fill="#d0d0d0" /><path d="M9 12l8-8M9 12l8 8" stroke="#dcdcdc" strokeWidth="1.500" /><circle cx="17" cy="4" r="2.300" fill="#e4e4e4" /><circle cx="17" cy="20" r="2.300" fill="#e4e4e4" /></DockBtn>
              </DockGroup>
            </div>

            {/* Right panels */}
            <div className="flex min-w-0 flex-1 flex-col gap-[3px]">
              <div className="shrink-0 border-b border-[#3a3a3a]">
                <TabBar>
                  <PanelTab label="导航器" w="w-[53px]" />
                  <PanelTab label="直方图" active w="w-[53px]" />
                </TabBar>
              </div>
              <div className="flex h-[223px] shrink-0 flex-col border-b border-[#3a3a3a]">
                <TabBar>
                  <PanelTab label="颜色" active w="w-[41px]" />
                  <PanelTab label="色板" w="w-[41px]" />
                  <PanelTab label="调整" w="w-[43px]" />
                </TabBar>
                <div className="flex flex-1 pt-[8px]">
                  <div className="relative ml-[8px] h-[32px] w-[32px]">
                    <div className="absolute left-[11px] top-[11px] h-[20px] w-[20px] border border-[#2c2c2c] bg-white" />
                    <div className="absolute left-0 top-0 h-[22px] w-[22px] border border-[#8a8a8a] bg-white ring-1 ring-inset ring-[#2c2c2c]" />
                  </div>
                  <div className="relative ml-[5px] h-[166px] w-[146px] bg-[linear-gradient(to_bottom,transparent,#000000),linear-gradient(to_right,#ffffff,#2000ff)]">
                    <i className="absolute left-0 top-0 h-[5px] w-[5px] rounded-br-full border-b border-r border-black" />
                  </div>
                  <svg width="9" height="10" viewBox="0 0 9 10" className="ml-[7px] mt-[45px]"><path d="M1 1h3l4 4-4 4H1z" fill="#e8e8e8" stroke="#2c2c2c" /></svg>
                  <div className="ml-[1px] h-[166px] w-[19px] bg-[linear-gradient(to_bottom,#ff0000,#ff00ff_16.6%,#0000ff_33.3%,#00ffff_50%,#00ff00_66.6%,#ffff00_83.3%,#ff0000)]" />
                </div>
              </div>
              <div className="flex min-h-0 flex-1 flex-col">
                <TabBar>
                  <PanelTab label="图层" active w="w-[41px]" />
                  <PanelTab label="通道" w="w-[43px]" />
                  <PanelTab label="路径" w="w-[42px]" />
                </TabBar>
                <div className="flex h-[34px] shrink-0 items-center border-b border-[#3e3e3e] pl-[4px] pt-[6px]">
                  <Select
                    label="类型"
                    w="w-[86px]"
                    icon={<svg width="11" height="11" viewBox="0 0 11 11" fill="none" stroke="#e8e8e8"><circle cx="4.500" cy="4.500" r="3.300" strokeWidth="1.400" /><path d="M7 7l3.500 3.500" strokeWidth="1.800" /></svg>}
                  />
                  <div className="ml-[15px] flex items-center gap-[11px]">
                    <svg width="13" height="11" viewBox="0 0 13 11"><path d="M.5.5h12v10H.5z" fill="none" stroke="#dcdcdc" /><path d="M2 9l3-4 2 2 2-2 2 4z" fill="#dcdcdc" /></svg>
                    <svg width="12" height="12" viewBox="0 0 12 12"><circle cx="6" cy="6" r="5.500" fill="#777" stroke="#dcdcdc" /><path d="M2 10l8-8a5.500 5.500 0 0 1-8 8z" fill="#e4e4e4" /></svg>
                    <svg width="12" height="11" viewBox="0 0 12 11"><path d="M.5.5h11V3.500h-1L10 2H7.500v7.500H9V10.500H3V9.500h1.500V2H2L1.500 3.500h-1z" fill="#e4e4e4" /></svg>
                    <svg width="12" height="12" viewBox="0 0 12 12"><path d="M2 2h8v8H2z" fill="none" stroke="#dcdcdc" /><path d="M0 0h3v3H0zM9 0h3v3H9zM0 9h3v3H0zM9 9h3v3H9z" fill="#dcdcdc" /></svg>
                    <svg width="11" height="13" viewBox="0 0 11 13"><path d="M3 6V.5h5l2.500 2.500v9H6" fill="none" stroke="#dcdcdc" /><path d="M.5 6.500h5.500v6H.5z" fill="#e4e4e4" /></svg>
                  </div>
                  <div className="ml-[12px] h-[19px] w-[8px] rounded-full border border-[#3a3a3a] bg-[#424242]">
                    <div className="-ml-[1px] h-[8px] w-[8px] rounded-full bg-white" />
                  </div>
                </div>
                <div className="flex h-[29px] shrink-0 items-center border-b border-[#3e3e3e] pl-[3px]">
                  <Select label="正常" w="w-[118px]" />
                  <span className="ml-[6px] whitespace-nowrap text-[#d0d0d0]">不透明度：</span>
                  <ComboInput value="100%" w="w-[54px] -ml-[2px]" />
                </div>
                <div className="flex h-[29px] shrink-0 items-center pb-[2px] pl-[7px]">
                  <span className="whitespace-nowrap text-[#d0d0d0]">锁定：</span>
                  <svg width="11" height="11" viewBox="0 0 11 11"><rect width="11" height="11" fill="#8a8a8a" /><path d="M0 0h3.700v3.700H0zM7.300 0H11v3.700H7.300zM3.700 3.700h3.600v3.600H3.700zM0 7.300h3.700V11H0zM7.300 7.300H11V11H7.300z" fill="#5e5e5e" /></svg>
                  <svg width="15" height="15" viewBox="6 3 19 18" className="ml-[9px]"><BrushShape c="#8a8a8a" /></svg>
                  <svg width="14" height="14" viewBox="0 0 14 14" className="ml-[8px]" fill="#e0e0e0"><path d="M7 0l2.500 3H8v3h3V4.500L14 7l-3 2.500V8H8v3h1.500L7 14l-2.500-3H6V8H3v1.500L0 7l3-2.500V6h3V3H4.500z" /></svg>
                  <svg width="14" height="13" viewBox="0 0 14 13" className="ml-[10px]" fill="none" stroke="#dcdcdc"><path d="M0 3h11v8M3 0v10h11M6 8l5-5" strokeDasharray="2 1" /></svg>
                  <svg width="11" height="13" viewBox="0 0 11 13" className="ml-[8px]"><path d="M2.500 5V3.500a3 3 0 0 1 6 0V5H10.500v7.500H.5V5zM4 5h3V3.500a1.500 1.500 0 0 0-3 0z" fill="#e4e4e4" fillRule="evenodd" /></svg>
                  <span className="ml-[9px] whitespace-nowrap text-[#d0d0d0]">填充：</span>
                  <ComboInput value="100%" w="w-[54px] -ml-[2px]" />
                </div>
                <div className="flex min-h-0 flex-1 flex-col bg-[#4a4a4a] pt-px">
                  <LayerRow
                    h="h-[42px]"
                    active
                    thumb={
                      <div className="ml-[8px] flex items-center">
                        <svg width="8" height="10" viewBox="0 0 8 10" fill="none" stroke="#e4e4e4"><path d="M8 2H3v6M1 6l2 3 2-3" /></svg>
                        <div className="relative ml-[2px] flex h-[34px] w-[36px] items-center justify-center">
                          <i className="absolute left-0 top-0 h-[4px] w-[6px] border-l border-t border-white" />
                          <i className="absolute right-0 top-0 h-[4px] w-[6px] border-r border-t border-white" />
                          <i className="absolute bottom-0 left-0 h-[4px] w-[6px] border-b border-l border-white" />
                          <i className="absolute bottom-0 right-0 h-[4px] w-[6px] border-b border-r border-white" />
                          <SunIcon size={18} />
                        </div>
                        <svg width="9" height="16" viewBox="0 0 9 16" className="ml-[1px]" fill="none" stroke="#d8d8d8" strokeWidth="1.400"><rect x="1.500" y="1" width="6" height="7" rx="3" /><rect x="1.500" y="8" width="6" height="7" rx="3" /></svg>
                        <div className="ml-[2px] h-[32px] w-[24px] border border-[#2f2f2f] bg-white" />
                      </div>
                    }
                  >
                    <LayerName>亮度/对比度  1</LayerName>
                  </LayerRow>
                  <LayerRow
                    h="h-[40px]"
                    thumb={<div className="ml-[4px]"><Checker dot={<i className="absolute left-[11px] top-[9px] h-[8px] w-[6px] bg-[#2000ff]" />} /></div>}
                  >
                    <LayerName ml="ml-[9px]" className="line-through">矩形  1</LayerName>
                  </LayerRow>
                  <LayerRow
                    h="h-[40px]"
                    thumb={<div className="ml-[4px]"><Checker dot={<i className="absolute left-[7px] top-[10px] h-[7px] w-[8px] rounded-full bg-[#ff0000]" />} /></div>}
                  >
                    <LayerName ml="ml-[9px]">椭圆  1</LayerName>
                  </LayerRow>
                  <LayerRow
                    h="h-[42px]"
                    thumb={<div className="ml-[4px] h-[32px] w-[24px] border border-[#2f2f2f] bg-white" />}
                  >
                    <LayerName ml="ml-[9px]">背景</LayerName>
                    <svg width="11" height="13" viewBox="0 0 11 13" className="ml-auto mr-[15px]" fill="none" stroke="#d8d8d8"><rect x=".5" y="5" width="10" height="7.500" /><path d="M3 5V3.500a2.500 2.500 0 0 1 5 0V5" /><circle cx="5.500" cy="8.500" r=".8" fill="#d8d8d8" /></svg>
                  </LayerRow>
                </div>
                <div className="flex h-[26px] shrink-0 items-center justify-end border-t border-[#3a3a3a] bg-[#535353] pr-[19px]">
                  <FootIcon><svg width="14" height="8" viewBox="0 0 14 8" fill="none" stroke="#8e8e8e"><rect x=".5" y=".5" width="7" height="7" rx="3.500" /><rect x="6.500" y=".5" width="7" height="7" rx="3.500" /></svg></FootIcon>
                  <FootIcon><span className="font-['Liberation_Serif'] text-[14px] italic leading-none text-[#d8d8d8]">fx</span></FootIcon>
                  <FootIcon><div className="flex h-[9px] w-[13px] items-center justify-center bg-[#e0e0e0]"><i className="h-[5px] w-[5px] rounded-full bg-[#444]" /></div></FootIcon>
                  <FootIcon><svg width="12" height="12" viewBox="0 0 12 12"><circle cx="6" cy="6" r="5.500" fill="#777" stroke="#dcdcdc" /><path d="M2 10l8-8a5.500 5.500 0 0 1-8 8z" fill="#e4e4e4" /></svg></FootIcon>
                  <FootIcon><svg width="13" height="10" viewBox="0 0 13 10"><path d="M0 1h5l1 1.500h7V10H0z" fill="#dcdcdc" /></svg></FootIcon>
                  <FootIcon><svg width="12" height="12" viewBox="0 0 12 12" fill="none" stroke="#dcdcdc"><path d="M.5 .5h10.500v7.500l-3.500 3.500H3V4" /></svg></FootIcon>
                  <FootIcon><Trash /></FootIcon>
                </div>
              </div>
            </div>
          </div>
        </div>
      </div>
      <Watermark />
    </div>
  );
}
